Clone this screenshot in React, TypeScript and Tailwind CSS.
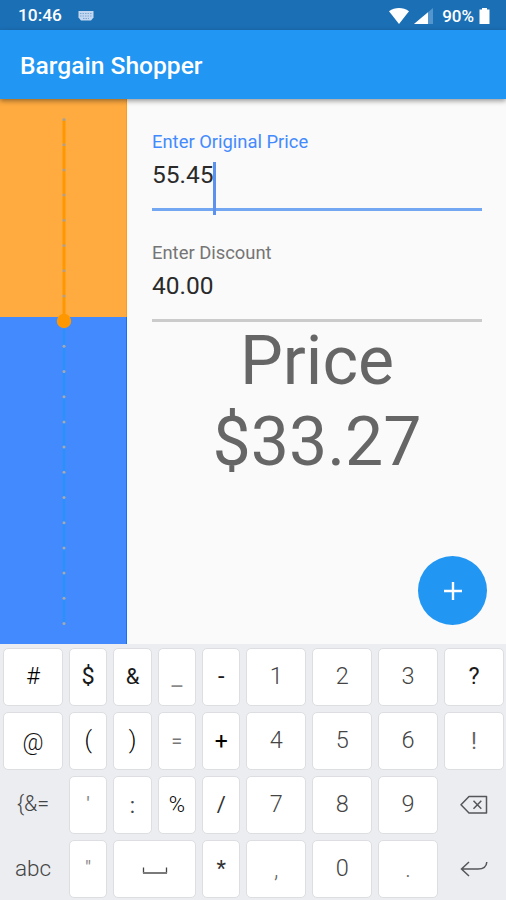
import type { ReactNode } from 'react';
import clsx from 'clsx';

interface KeyDef {
  id: string;
  label: ReactNode;
  className?: string;
  flat?: boolean;
}

interface FieldProps {
  label: string;
  value: string;
  focused?: boolean;
}

const DIGIT = 'text-[23.5px] font-light text-[#444] pb-px';
const SYMBOL = 'text-[23.5px] text-[#1a1a1a]';
const SYMBOL_LIGHT = 'text-[23.5px] font-light text-black';

const SpaceIcon = () => (
  <svg width="26" height="8" viewBox="0 0 26 8" fill="none">
    <path d="M1.5 0.5V6.3M24.5 0.5V6.3" stroke="#444" strokeWidth="1.3" />
    <path d="M1 6H25" stroke="#7a7a7a" strokeWidth="2" />
  </svg>
);

const BackspaceIcon = () => (
  <svg width="28" height="20" viewBox="0 0 28 20" fill="none" stroke="#55565a" strokeWidth="1.5">
    <path d="M9 1.5H26.5V18H9L1 9.8Z" strokeLinejoin="round" />
    <path d="M13.5 5.8L21.3 13.8M21.3 5.8L13.5 13.8" />
  </svg>
);

const EnterIcon = () => (
  <svg width="28" height="18" viewBox="0 0 28 18" fill="none" stroke="#55565a" strokeWidth="1.5">
    <path d="M9 2L1.5 9L9 16M1.5 9H18C23 9 26.5 7 26.8 2" />
  </svg>
);

const KEYS: KeyDef[] = [
  { id: 'hash', label: '#', className: SYMBOL_LIGHT },
  { id: 'dollar', label: '$', className: SYMBOL },
  { id: 'amp', label: '&', className: 'text-[22px] text-[#1a1a1a]' },
  { id: 'underscore', label: '_', className: 'text-[24px] text-[#8a8a8a]' },
  { id: 'minus', label: '-', className: SYMBOL },
  { id: '1', label: '1', className: DIGIT },
  { id: '2', label: '2', className: DIGIT },
  { id: '3', label: '3', className: DIGIT },
  { id: 'question', label: '?', className: SYMBOL },

  { id: 'at', label: '@', className: 'text-[23px] font-light text-[#111] pt-0.5' },
  { id: 'paren-open', label: '(', className: SYMBOL_LIGHT },
  { id: 'paren-close', label: ')', className: SYMBOL_LIGHT },
  { id: 'equals', label: '=', className: 'text-[20px] text-[#777]' },
  { id: 'plus', label: '+', className: 'text-[23px] text-black' },
  { id: '4', label: '4', className: DIGIT },
  { id: '5', label: '5', className: DIGIT },
  { id: '6', label: '6', className: DIGIT },
  { id: 'bang', label: '!', className: 'text-[23px] text-[#666]' },

  { id: 'more', label: '{&=', className: 'text-[21.5px] font-light text-[#444] pb-[3px]', flat: true },
  { id: 'quote', label: "'", className: 'text-[21px] text-[#888] pb-px' },
  { id: 'colon', label: ':', className: 'text-[22px] text-[#444] pt-0.5' },
  { id: 'percent', label: '%', className: 'text-[22px] font-light text-black' },
  { id: 'slash', label: '/', className: 'text-[22px] text-[#333]' },
  { id: '7', label: '7', className: DIGIT },
  { id: '8', label: '8', className: DIGIT },
  { id: '9', label: '9', className: DIGIT },
  { id: 'backspace', label: <BackspaceIcon />, flat: true },

  { id: 'abc', label: 'abc', className: 'text-[22.5px] font-light text-[#444] pb-0.5', flat: true },
  { id: 'double-quote', label: '"', className: 'text-[19px] text-[#888] pb-1' },
  { id: 'space', label: <SpaceIcon />, className: 'col-span-2 pt-1' },
  { id: 'star', label: '*', className: 'text-[22px] text-[#333]' },
  { id: 'comma', label: ',', className: 'text-[23px] font-light text-[#666]' },
  { id: '0', label: '0', className: DIGIT },
  { id: 'period', label: '.', className: 'text-[23px] font-light text-[#666]' },
  { id: 'enter', label: <EnterIcon />, flat: true },
];

function StatusBar() {
  return (
    <div className="flex h-[30px] items-center bg-[#1b6fb5] pt-[2px] pr-4 pl-[18px] text-white">
      <span className="text-[17.3px] leading-none font-medium">10:46</span>
      <svg className="ml-4" width="16" height="10" viewBox="0 0 16 10">
        <path d="M0.5 0H15.5V6.5L13 9.5H3L0.5 6.5Z" fill="#c3d8f0" />
        <path d="M2 2.5H14M2 5H14M5 7.5H11" stroke="#7ba8d6" strokeDasharray="1.5 1" />
      </svg>
      <div className="ml-auto flex items-center">
        <svg width="20" height="16" viewBox="0 0 20 16" fill="#fff">
          <path d="M0 3.2C6 -1 14 -1 20 3.2L10 16Z" />
        </svg>
        <svg className="ml-[5px]" width="19" height="16" viewBox="0 0 19 16">
          <path d="M19 0V16H0Z" fill="#5595cd" />
          <path d="M14 4.2V16H0Z" fill="#fff" />
        </svg>
        <span className="ml-[9px] text-[17px] leading-none font-medium">90%</span>
        <svg className="ml-[5px]" width="11" height="16" viewBox="0 0 11 16" fill="#fff">
          <path d="M3 0H8V1.5H10.5V16H0.5V1.5H3Z" />
        </svg>
      </div>
    </div>
  );
}

function DiscountSlider() {
  return (
    <div className="relative w-[127px] shrink-0">
      <div className="flex h-full flex-col">
        <div className="h-[218px] border-r border-[#ff9b17] bg-[#ffab40]" />
        <div className="flex-1 border-r border-[#1470f5] bg-[#448aff]" />
      </div>
      <svg className="absolute top-0 left-[54px]" width="20" height="545" viewBox="0 0 20 545">
        <path d="M10 20V222" stroke="#ff9800" strokeWidth="3" />
        <path d="M10 222V526" stroke="#2f8ffa" strokeWidth="3" />
        {Array.from({ length: 21 }, (_, i) => (
          <circle key={i} cx="10" cy={20.5 + i * 25.2} r="1.5" fill={i < 8 ? '#a9a19c' : '#a8a8b0'} />
        ))}
        <circle cx="10" cy="222" r="7.2" fill="#ff9800" />
      </svg>
    </div>
  );
}

function Field({ label, value, focused }: FieldProps) {
  return (
    <div
      className={clsx(
        'h-[80px] border-b-[3px]',
        focused ? 'border-[#73a7f2]' : 'border-[#cbcbcb]'
      )}
    >
      <div className={clsx('text-[18.4px] leading-[22px]', focused ? 'text-[#448aff]' : 'text-[#757575]')}>
        {label}
      </div>
      <div className="relative mt-[7px] flex text-[24.5px] leading-[30px] text-[#2a2a2a]">
        {value}
        {focused && <span className="absolute top-[2px] left-[61px] h-[53px] w-[3px] bg-[#5c92ee]" />}
      </div>
    </div>
  );
}

function Keyboard() {
  return (
    <div className="grid h-[256px] grid-cols-[60fr_repeat(4,38.5fr)_repeat(4,60fr)] grid-rows-4 gap-x-[5.8px] gap-y-[6px] bg-[#ebedf0] pt-[4px] pr-[2px] pb-[2px] pl-[3px]">
      {KEYS.map((k) => (
        <div
          key={k.id}
          className={clsx(
            'flex min-w-0 items-center justify-center rounded-[5px] leading-none',
            !k.flat && 'border border-[#dcdee1] bg-white',
            k.className
          )}
        >
          {k.label}
        </div>
      ))}
    </div>
  );
}

export default function App() {
  return (
    <div className="flex h-[900px] w-[506px] flex-col overflow-hidden bg-[#fafafa] font-[Roboto,sans-serif]">
      <StatusBar />
      <header className="relative z-10 flex h-[69px] items-center bg-[#2196f3] pt-[3px] pl-5 shadow-[0_2px_5px_rgba(0,0,0,0.4)]">
        <h1 className="text-[24.6px] font-medium text-white">Bargain Shopper</h1>
      </header>

      <main className="relative flex h-[545px]">
        <DiscountSlider />
        <section className="flex flex-1 flex-col pt-[32px] pr-6 pl-[25px]">
          <Field label="Enter Original Price" value="55.45" focused />
          <div className="mt-[31px]">
            <Field label="Enter Discount" value="40.00" />
          </div>
          <div className="-mt-px text-center text-[68px] leading-[81px] text-[#666]">
            <div>Price</div>
            <div>$33.27</div>
          </div>
        </section>
        <button
          aria-label="Add"
          className="absolute right-[19px] bottom-[19px] flex size-[69px] items-center justify-center rounded-full bg-[#2196f3]"
        >
          <svg width="18" height="18" viewBox="0 0 18 18" stroke="#fff" strokeWidth="2.4">
            <path d="M9 0V18M0 9H18" />
          </svg>
        </button>
      </main>

      <Keyboard />
    </div>
  );
}
